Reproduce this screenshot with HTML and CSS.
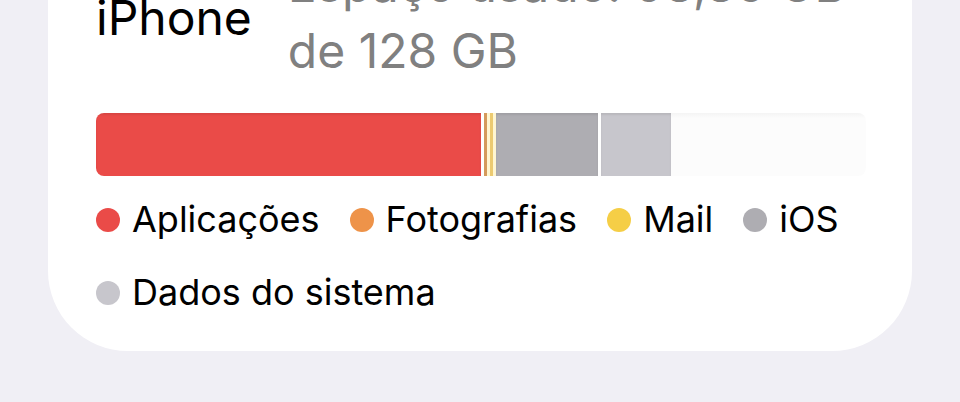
FILE: index.html
```
<!DOCTYPE html>
<html lang="pt">
<head>
    <meta charset="UTF-8">
    <meta name="viewport" content="width=device-width, initial-scale=1.0">
    <title>Armazenamento</title>
    <link rel="stylesheet" href="styles.css">
</head>
<body>

    <main class="card">
        <header class="card-header">
            <h1>iPhone</h1>
            <p class="usage">Espaço usado: 98,86 GB de 128 GB</p>
        </header>

        <div class="storage-bar">
            <div class="segment apps" style="width: 50%"></div>
            <div class="segment photos"></div>
            <div class="segment mail"></div>
            <div class="segment ios" style="width: 13.2%"></div>
            <div class="segment system" style="width: 9.1%"></div>
        </div>

        <ul class="legend">
            <li><span class="dot apps"></span>Aplicações</li>
            <li><span class="dot photos"></span>Fotografias</li>
            <li><span class="dot mail"></span>Mail</li>
            <li><span class="dot ios"></span>iOS</li>
            <li><span class="dot system"></span>Dados do sistema</li>
        </ul>
    </main>

</body>
</html>
```

FILE: styles.css
```
* {
    box-sizing: border-box;
    margin: 0;
    padding: 0;
}
body {
    font-family: Inter, "Liberation Sans", sans-serif;
    background-color: #f0eff5;
    color: #000;
    overflow: hidden;
}
/* the top of the card is scrolled out of view */
.card {
    margin: -96px 48px 48px;
    padding: 48px 46px 22px 48px;
    background-color: #fff;
    border-radius: 80px;
}
.card-header {
    display: flex;
    align-items: center;
    gap: 36px;
    margin-bottom: 29px;
}
.card-header h1 {
    font-size: 48px;
    font-weight: 400;
    line-height: 66px;
}
.usage {
    flex: 1;
    font-size: 48px;
    line-height: 66px;
    color: #808080;
}
.storage-bar {
    display: flex;
    gap: 3px;
    height: 63px;
    margin-bottom: 7px;
    border-radius: 8px;
    overflow: hidden;
    background: linear-gradient(#f4f4f4, #fcfcfc 5px);
}
.segment {
    flex-shrink: 0;
    min-width: 3px;
    box-shadow: 3px 0 #fff, inset 0 2px 2px rgba(0, 0, 0, 0.08);
}
.segment.photos,
.segment.mail {
    box-shadow: 3px 0 #fff6d0;
}
.segment.system {
    box-shadow: inset 0 2px 2px rgba(0, 0, 0, 0.08);
}
.legend {
    display: flex;
    flex-wrap: wrap;
    column-gap: 30px;
    list-style: none;
    font-size: 36px;
    line-height: 73px;
}
.legend li {
    display: flex;
    align-items: center;
    gap: 12px;
}
.dot {
    width: 24px;
    height: 24px;
    border-radius: 50%;
}
.apps {
    background-color: #ea4b48;
}
.photos {
    background-color: #ee9349;
}
.mail {
    background-color: #f5ce46;
}
.ios {
    background-color: #aeadb2;
}
.system {
    background-color: #c7c6cc;
}
.segment.photos {
    background-color: #d49a5c;
}
.segment.mail {
    background-color: #ecca70;
}
```
